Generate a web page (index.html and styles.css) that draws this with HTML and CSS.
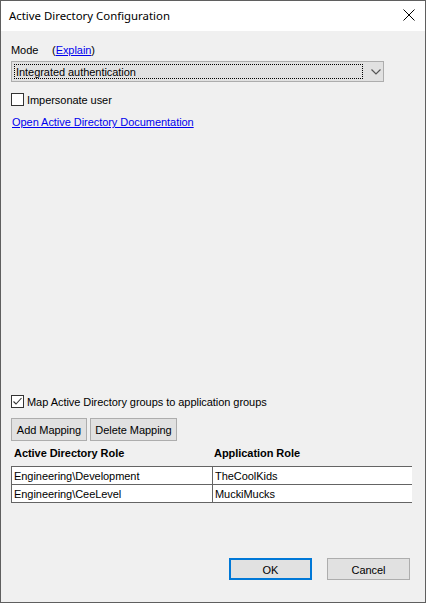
FILE: index.html
```html
<!DOCTYPE html>
<html>
<head>
<meta charset="utf-8">
<link rel="stylesheet" href="styles.css">
</head>
<body>
<div class="window">
  <div class="titlebar">
    <span class="title">Active Directory Configuration</span>
    <svg class="close" width="12" height="12" viewBox="0 0 12 12"><path d="M0.5 0.5 L11.5 11.5 M11.5 0.5 L0.5 11.5" stroke="#000" stroke-width="1" fill="none"/></svg>
  </div>
  <div class="content">
    <div class="mode-row"><span class="mode-label">Mode</span><span>(<a class="link" href="#">Explain</a>)</span></div>
    <div class="combo">
      <div class="combo-value"><span>Integrated authentication</span></div>
      <svg class="combo-arrow" width="10" height="6" viewBox="0 0 10 6"><path d="M0.5 0.5 L5 5 L9.5 0.5" stroke="#555" stroke-width="1.2" fill="none"/></svg>
    </div>
    <label class="check-row imp"><span class="box"></span><span class="check-text">Impersonate user</span></label>
    <a class="link doc" href="#">Open Active Directory Documentation</a>
    <div class="spacer"></div>
    <label class="check-row map"><span class="box checked"><svg width="11" height="11" viewBox="0 0 11 11"><path d="M1.5 5.5 L4 8 L9.5 2" stroke="#333" stroke-width="1.1" fill="none"/></svg></span><span class="check-text">Map Active Directory groups to application groups</span></label>
    <div class="btn-row">
      <button class="btn add">Add Mapping</button>
      <button class="btn del">Delete Mapping</button>
    </div>
    <div class="grid-head"><span>Active Directory Role</span><span>Application Role</span></div>
    <div class="grid">
      <div class="cell">Engineering\Development</div><div class="cell">TheCoolKids</div>
      <div class="cell">Engineering\CeeLevel</div><div class="cell">MuckiMucks</div>
    </div>
    <div class="footer">
      <button class="btn ok">OK</button>
      <button class="btn cancel">Cancel</button>
    </div>
  </div>
</div>
</body>
</html>
```
FILE: styles.css
```css
html, body { margin: 0; padding: 0; }
body { width: 426px; height: 603px; overflow: hidden; }
.window {
  box-sizing: border-box;
  width: 426px; height: 603px;
  border: 1px solid #5f5f5f;
  display: flex; flex-direction: column;
  font-family: "Liberation Sans", Arial, sans-serif;
  font-size: 11px; letter-spacing: -0.05px; color: #000;
}
.titlebar {
  height: 30px; background: #fff;
  display: flex; align-items: center; justify-content: space-between;
  padding: 0 10px 0 8px;
}
.title { font-family: "Noto Sans", "Open Sans", sans-serif; font-size: 11.4px; letter-spacing: 0; color: #000; padding-bottom: 2px; }
.close { padding-bottom: 2px; }
.content {
  flex: 1; background: #f0f0f0;
  display: flex; flex-direction: column;
  padding: 0 14px 22px 10px;
}
.mode-row { margin-top: 13px; height: 13px; line-height: 13px; display: flex; }
.mode-label { width: 41px; }
.link { color: #0000ee; text-decoration: underline; }
.combo {
  margin-top: 4px; width: 373px; height: 21px; box-sizing: border-box;
  border: 1px solid #adadad; background: #e1e1e1;
  display: flex; align-items: center; padding: 2px;
}
.combo-value {
  width: 350px; height: 15px; box-sizing: border-box;
  border: 1px dotted #000; line-height: 14px; padding-left: 1px;
}
.combo-arrow { margin-left: 8px; }
.check-row { display: flex; align-items: center; height: 13px; line-height: 13px; }
.check-text { padding-top: 2px; }
.imp { margin-top: 11px; }
.box {
  width: 13px; height: 13px; box-sizing: border-box;
  border: 1px solid #333; background: #fff; margin-right: 3px;
  display: flex; align-items: center; justify-content: center;
}
.doc { margin-top: 10px; margin-left: 1px; line-height: 13px; align-self: flex-start; }
.spacer { flex: 1; }
.btn-row { margin-top: 10px; display: flex; gap: 3px; }
.btn {
  font-family: inherit; font-size: 11px; letter-spacing: -0.05px; color: #000;
  background: #e1e1e1; border: 1px solid #adadad; border-radius: 0;
  height: 23px; padding: 1px 0 0; margin: 0;
}
.add { width: 76px; }
.del { width: 87px; }
.grid-head {
  margin-top: 6px; height: 13px; line-height: 13px;
  display: grid; grid-template-columns: 200px 200px; font-weight: bold; padding-left: 3px;
}
.grid {
  margin-top: 6px; width: 401px; box-sizing: border-box;
  display: grid; grid-template-columns: 200px 199px;
  border: 1px solid #646464;
  gap: 1px; background-color: #646464;
}
.cell { background: #fff; height: 17px; line-height: 17px; padding: 1px 0 0 2px; box-sizing: border-box; }
.footer { margin-top: 55px; display: flex; justify-content: flex-end; gap: 15px; padding-right: 1px; }
.ok, .cancel { width: 83px; height: 22px; }
.ok { border: 2px solid #0078d7; }
```
